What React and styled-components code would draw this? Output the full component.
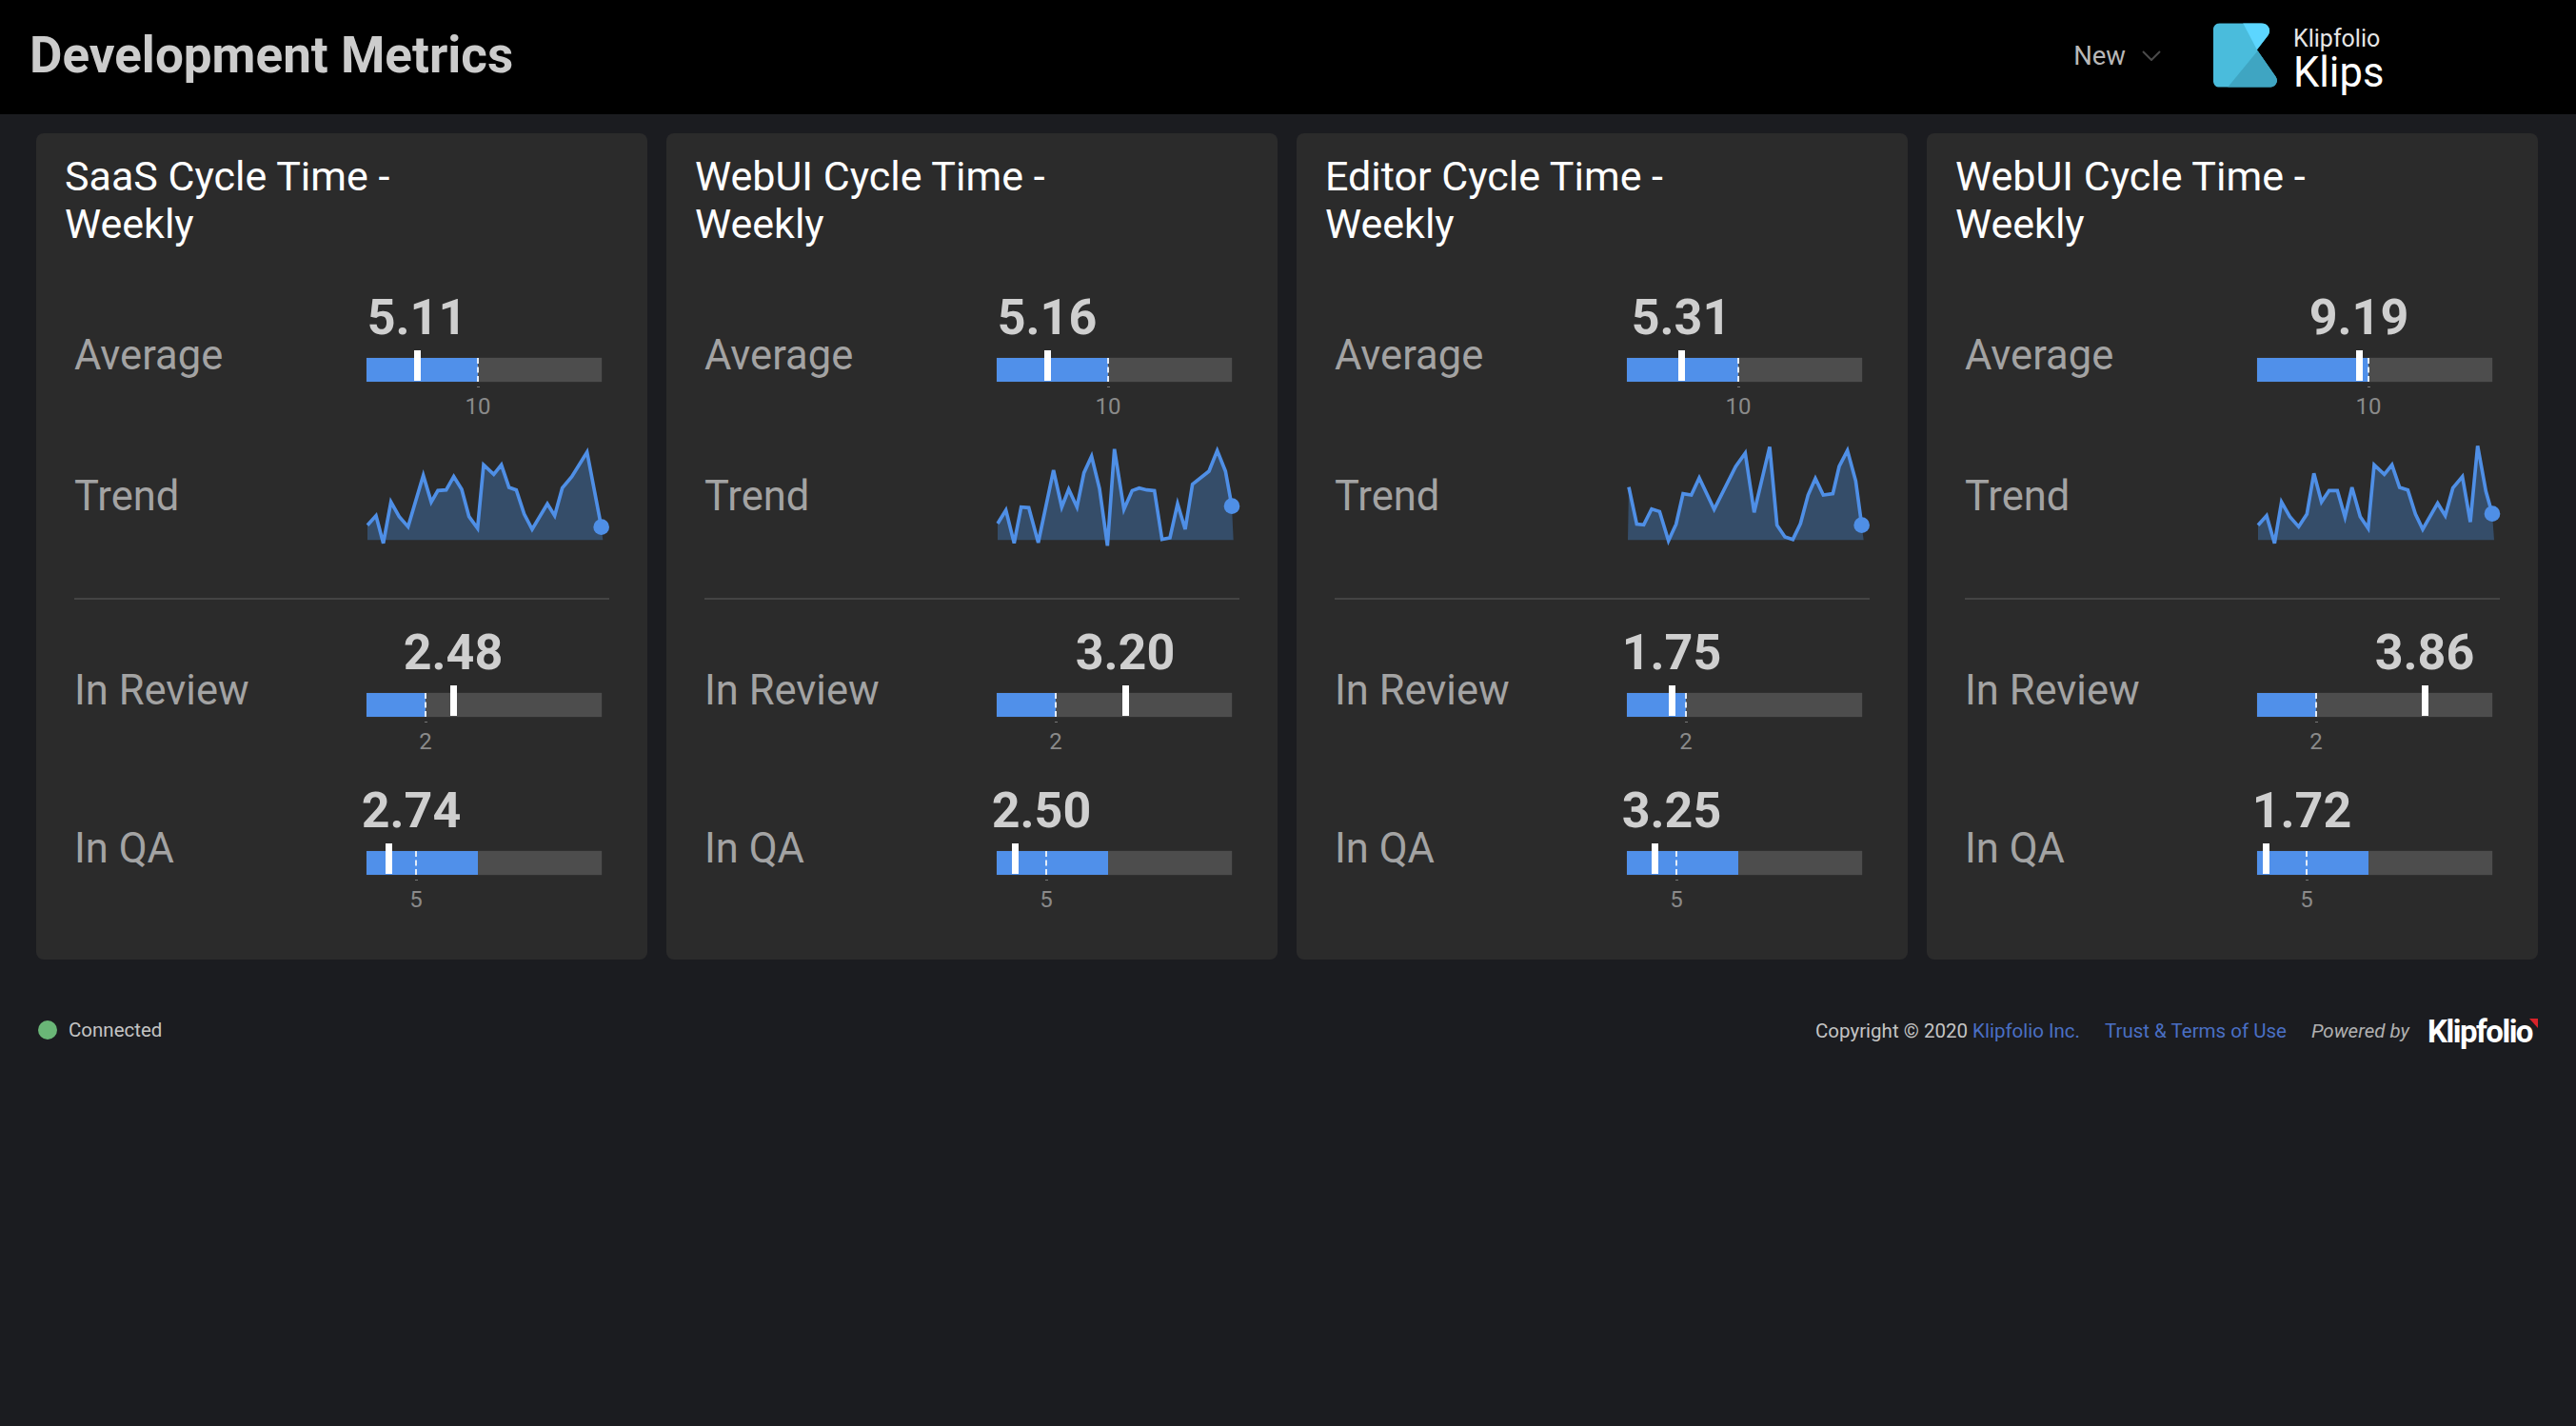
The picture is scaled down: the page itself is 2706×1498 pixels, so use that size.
import React from 'react';
import styled, { createGlobalStyle } from 'styled-components';

const GlobalStyle = createGlobalStyle`
  html, body {
    margin: 0;
    background: #1b1c20;
    font-family: Roboto, "Liberation Sans", sans-serif;
  }
`;

const Page = styled.div`
  min-height: 1498px;
  background: #1b1c20;
`;

const Header = styled.header`
  box-sizing: border-box;
  height: 120px;
  background: #000;
  display: flex;
  align-items: center;
  padding: 0 0 4px 31px;
`;

const PageTitle = styled.h1`
  flex: 1;
  margin: 0;
  color: #cccccc;
  font-size: 53px;
  font-weight: 700;
  line-height: 60px;
`;

const NewMenu = styled.div`
  display: flex;
  align-items: center;
  gap: 17px;
  color: #b8b8b8;
  font-size: 27.5px;
  margin-right: 55px;
`;

const Brand = styled.div`
  display: flex;
  align-items: center;
  gap: 17px;
  width: 381px;
  color: #fff;
`;

const BrandText = styled.div`
  display: flex;
  flex-direction: column;
  padding-top: 9px;
`;

const BrandTop = styled.span`
  font-size: 25px;
  line-height: 28px;
  color: #e6e6e6;
`;

const BrandBottom = styled.span`
  font-size: 43.5px;
  line-height: 44px;
`;

const Cards = styled.main`
  display: grid;
  grid-template-columns: repeat(4, 642px);
  gap: 20px;
  padding: 20px 40px 0 38px;
`;

const Card = styled.section`
  background: #2b2b2b;
  border-radius: 8px;
  padding: 20px 40px 50px;
`;

const CardTitle = styled.h2`
  margin: 0 0 46px -10px;
  width: 440px;
  color: #fff;
  font-size: 43px;
  font-weight: 400;
  line-height: 50px;
`;

const MetricRow = styled.div`
  display: grid;
  grid-template-columns: 307px 247px;
  align-items: center;
  height: ${({ $tall }) => ($tall ? '150px' : '134px')};
`;

const MetricLabel = styled.div`
  color: #a3a3a3;
  font-size: 43.5px;
  padding: ${({ $tall }) => ($tall ? '13px 0 0' : '0')};
`;

const Chart = styled.div`
  align-self: start;
`;

const Value = styled.div`
  width: 106px;
  height: 56px;
  color: #cfcfcf;
  font-size: 52px;
  font-weight: 700;
  line-height: 56px;
  text-align: center;
  white-space: nowrap;
`;

const Track = styled.div`
  position: relative;
  height: 25px;
  margin-top: 14px;
  background: #4d4d4d;
  box-shadow: 0 0 1px #4d4d4d;
`;

const Fill = styled.div`
  height: 100%;
  background: #5090ea;
`;

const Target = styled.div`
  position: absolute;
  top: 0;
  bottom: 0;
  width: 0;
  border-left: 2px dashed #e4ecf7;
`;

const Marker = styled.div`
  position: absolute;
  top: -8px;
  bottom: 1px;
  width: 7px;
  margin-left: -3px;
  background: #fff;
`;

const Axis = styled.div`
  width: 60px;
  margin-top: 5px;
  color: #8a8a8a;
  font-size: 24px;
  line-height: 28px;
  text-align: center;
  &::before {
    content: '';
    display: block;
    width: 3px;
    height: 1px;
    margin: 0 auto 6px;
    background: #777;
  }
`;

const Spark = styled.svg`
  display: block;
  width: 247px;
  height: 150px;
  margin-left: 1px;
  overflow: visible;
`;

const Divider = styled.hr`
  height: 2px;
  margin: 38px 0 28px;
  border: 0;
  background: #444;
`;

const GapRow = styled.div`
  height: 32px;
`;

const Footer = styled.footer`
  display: flex;
  align-items: center;
  height: 40px;
  margin-top: 54px;
  padding: 0 40px;
  font-size: 20.5px;
  color: #c4c4c4;
`;

const Status = styled.div`
  flex: 1;
  display: flex;
  align-items: center;
  gap: 12px;
`;

const StatusDot = styled.span`
  width: 20px;
  height: 20px;
  border-radius: 50%;
  background: #6ab677;
`;

const Legal = styled.div`
  display: flex;
  align-items: center;
  padding-top: 2px;
`;

const FootLink = styled.a`
  color: #4a6fc4;
  margin-left: ${({ $gap }) => $gap || 0}px;
`;

const Powered = styled.em`
  margin: 0 19px 0 26px;
  color: #b0b0b0;
`;

const FootLogo = styled.span`
  position: relative;
  color: #fff;
  font-size: 33px;
  font-weight: 700;
  letter-spacing: -1.5px;
  padding-right: 6px;
  &::after {
    content: '';
    position: absolute;
    top: 6px;
    right: 0;
    border-top: 10px solid #d8232a;
    border-left: 9px solid transparent;
  }
`;

const LogoMark = () => (
  <svg width="67" height="68" viewBox="0 0 200 202">
    <defs>
      <clipPath id="klipsShape">
        <path d="M20 0H150C172 0 183 22 172 38L137 84L196 168C206 184 194 202 175 202H20C9 202 0 193 0 182V20C0 9 9 0 20 0Z" />
      </clipPath>
    </defs>
    <g clipPath="url(#klipsShape)">
      <rect width="200" height="202" fill="#4abcdc" />
      <polygon points="93,0 200,0 200,40 137,84" fill="#5cd6ff" />
      <polygon points="140,86 200,175 200,202 45,202" fill="#3fa5c2" />
    </g>
  </svg>
);

const sparks = [
  { start: 78, end: 820, dot: [815, 341], points: '78,335 105,305 128,392 152,262 178,308 206,340 254,178 279,262 300,226 326,224 350,182 375,222 398,308 425,345 444,145 476,175 500,145 524,216 547,224 572,300 597,348 645,268 668,305 692,218 722,182 770,105 815,340' },
  { start: 54, end: 797, dot: [792, 275], points: '54,330 80,288 106,392 128,278 152,280 182,390 230,162 256,278 278,222 304,278 326,170 350,118 375,220 400,400 422,95 452,285 478,226 500,218 524,224 548,226 572,380 597,375 621,268 645,348 668,206 720,165 746,100 772,165 792,275' },
  { start: 60, end: 803, dot: [797, 335], points: '63,215 88,332 110,334 135,284 160,292 188,384 212,332 234,236 260,240 285,186 332,285 400,150 430,108 458,295 507,88 530,335 555,372 580,380 604,330 628,240 651,188 676,240 706,236 726,150 752,100 778,195 797,335' },
  { start: 66, end: 810, dot: [804, 299], points: '66,335 93,305 118,392 140,262 166,308 194,340 220,300 242,172 266,262 290,226 316,226 340,310 362,216 388,308 413,345 432,145 464,175 488,145 512,216 538,224 562,300 585,348 632,266 656,305 680,218 710,182 735,325 758,85 784,228 804,299' },
];

const data = [
  { title: 'SaaS Cycle Time - Weekly', avg: ['5.11', 53], review: ['2.48', 91], qa: ['2.74', 23] },
  { title: 'WebUI Cycle Time - Weekly', avg: ['5.16', 53], review: ['3.20', 135], qa: ['2.50', 19] },
  { title: 'Editor Cycle Time - Weekly', avg: ['5.31', 57], review: ['1.75', 47], qa: ['3.25', 29] },
  { title: 'WebUI Cycle Time - Weekly', avg: ['9.19', 107], review: ['3.86', 176], qa: ['1.72', 9] },
];

const Metric = ({ label, value, marker, fill, target, tick }) => (
  <MetricRow>
    <MetricLabel>{label}</MetricLabel>
    <Chart>
      <Value style={{ marginLeft: Math.max(-6, marker - 53) }}>{value}</Value>
      <Track>
        <Fill style={{ width: fill }} />
        <Target style={{ left: target - 1 }} />
        <Marker style={{ left: marker }} />
      </Track>
      <Axis style={{ marginLeft: target - 30 }}>{tick}</Axis>
    </Chart>
  </MetricRow>
);

const Sparkline = ({ start, end, dot, points }) => (
  <Spark viewBox={`${start} 0 741 450`}>
    <polygon points={`${start},382 ${points} ${end},382`} fill="#354d69" />
    <polyline points={points} fill="none" stroke="#4f8fe6" strokeWidth="11" />
    <circle cx={dot[0]} cy={dot[1]} r="25" fill="#4f8fe6" />
  </Spark>
);

const App = () => (
  <Page>
    <GlobalStyle />
    <Header>
      <PageTitle>Development Metrics</PageTitle>
      <NewMenu>
        New
        <svg width="20" height="11" viewBox="0 0 20 11" fill="none" stroke="#4a4a4a" strokeWidth="2">
          <path d="M1 1l9 9 9-9" />
        </svg>
      </NewMenu>
      <Brand>
        <LogoMark />
        <BrandText>
          <BrandTop>Klipfolio</BrandTop>
          <BrandBottom>Klips</BrandBottom>
        </BrandText>
      </Brand>
    </Header>
    <Cards>
      {data.map((card, i) => (
        <Card key={i}>
          <CardTitle>{card.title}</CardTitle>
          <Metric label="Average" value={card.avg[0]} marker={card.avg[1]} fill={117} target={117} tick="10" />
          <MetricRow $tall>
            <MetricLabel $tall>Trend</MetricLabel>
            <Chart>
              <Sparkline {...sparks[i]} />
            </Chart>
          </MetricRow>
          <Divider />
          <Metric label="In Review" value={card.review[0]} marker={card.review[1]} fill={62} target={62} tick="2" />
          <GapRow />
          <Metric label="In QA" value={card.qa[0]} marker={card.qa[1]} fill={117} target={52} tick="5" />
        </Card>
      ))}
    </Cards>
    <Footer>
      <Status>
        <StatusDot />
        Connected
      </Status>
      <Legal>
        Copyright © 2020&nbsp;
        <FootLink>Klipfolio Inc.</FootLink>
        <FootLink $gap={26}>Trust &amp; Terms of Use</FootLink>
        <Powered>Powered by</Powered>
        <FootLogo>Klipfolio</FootLogo>
      </Legal>
    </Footer>
  </Page>
);

export default App;
